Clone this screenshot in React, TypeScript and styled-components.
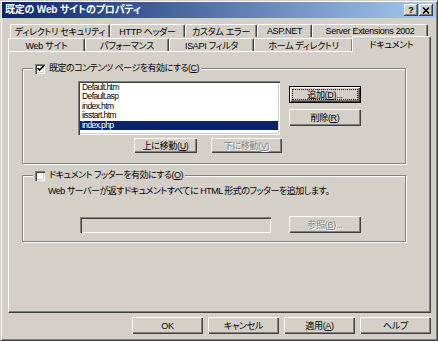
import styled, { createGlobalStyle } from "styled-components";

const GlobalStyle = createGlobalStyle`
  html, body {
    margin: 0;
    padding: 0;
    background: #d4d0c8;
  }
  body {
    font-family: "Liberation Sans", "Noto Sans CJK JP", sans-serif;
    font-size: 9px;
    font-feature-settings: "palt";
    color: #000;
  }
  * {
    box-sizing: border-box;
  }
`;

const Window = styled.div`
    width: 438px;
    height: 341px;
    display: flex;
    flex-direction: column;
    padding: 1px;
    background: #d4d0c8;
    border: 1px solid;
    border-color: #d4d0c8 #404040 #404040 #d4d0c8;
    box-shadow: inset 1px 1px #fff, inset -1px -1px #808080;
`;

const TitleBar = styled.div`
    flex: none;
    height: 16px;
    display: flex;
    align-items: center;
    padding: 0 3px 0 3px;
    background: linear-gradient(to right, #0a246a, #a6caf0);
`;

const Title = styled.div`
    flex: 1;
    color: #fff;
    font-weight: bold;
    font-size: 10px;
    line-height: 16px;
    letter-spacing: -0.2px;
    white-space: nowrap;
`;

const CaptionButton = styled.div<{ $gap: number }>`
    width: 14px;
    height: 12px;
    margin-left: ${(p) => p.$gap}px;
    display: flex;
    align-items: center;
    justify-content: center;
    background: #d4d0c8;
    box-shadow: inset -1px -1px #404040, inset 1px 1px #fff, inset -2px -2px #808080;
    font: bold 9px "Liberation Sans", sans-serif;
    line-height: 12px;
`;

const Body = styled.div`
    flex: 1;
    display: flex;
    flex-direction: column;
    padding: 6px 5px 0 6px;
`;

const TabRow = styled.div<{ $h: number; $indent: number }>`
    display: flex;
    align-items: flex-end;
    height: ${(p) => p.$h}px;
    padding-left: ${(p) => p.$indent}px;
`;

const Tab = styled.div<{ $w: number; $h: number; $active?: boolean }>`
    position: relative;
    width: ${(p) => p.$w}px;
    height: ${(p) => p.$h}px;
    flex: none;
    display: flex;
    align-items: center;
    justify-content: center;
    white-space: nowrap;
    letter-spacing: -0.3px;
    background: #d4d0c8;
    border-top: 1px solid #fff;
    border-left: 1px solid #fff;
    border-right: 1px solid #404040;
    border-radius: 2px 2px 0 0;
    box-shadow: inset -1px 0 #808080;
    ${(p) =>
        p.$active
            ? `
        z-index: 2;
        margin-left: -1px;
        margin-bottom: -1px;
    `
            : ""}
`;

const Page = styled.div`
    height: 262px;
    display: flex;
    flex-direction: column;
    padding: 11px 24px 0 13px;
    border: 1px solid;
    border-color: #fff #404040 #404040 #fff;
    box-shadow: inset -1px -1px #808080;
`;

const Group = styled.fieldset<{ $top?: number }>`
    margin: ${(p) => p.$top ?? 0}px 0 0 0;
    padding: 0;
    min-width: 0;
    border: 1px solid #808080;
    box-shadow: inset 1px 1px #fff, 1px 1px #fff;
`;

const Legend = styled.legend`
    margin-left: 10px;
    padding: 0 2px;
    height: 11px;
    background: #d4d0c8;
`;

const LegendInner = styled.span`
    display: flex;
    align-items: center;
    gap: 4px;
    height: 11px;
    line-height: 11px;
    letter-spacing: -0.5px;
    white-space: nowrap;
`;

const CheckBox = styled.span`
    width: 10px;
    height: 10px;
    flex: none;
    display: flex;
    align-items: center;
    justify-content: center;
    background: #fff;
    box-shadow: inset 1px 1px #808080, inset 2px 2px #404040, inset -1px -1px #fff, inset -2px -2px #d4d0c8;
`;

const ContentRow = styled.div`
    display: flex;
    padding: 7px 0 10px 55px;
`;

const LeftCol = styled.div`
    display: flex;
    flex-direction: column;
`;

const RightCol = styled.div`
    display: flex;
    flex-direction: column;
    gap: 6px;
    margin-left: 9px;
    padding-top: 5px;
`;

const ListBox = styled.div`
    width: 202px;
    height: 54px;
    padding: 2px 2px;
    background: #fff;
    box-shadow: inset 1px 1px #808080, inset 2px 2px #404040, inset -1px -1px #fff, inset -2px -2px #d4d0c8;
`;

const ListItem = styled.div<{ $selected?: boolean }>`
    height: 9.4px;
    line-height: 9.4px;
    padding-left: 2px;
    font-size: 8.5px;
    letter-spacing: -0.6px;
    white-space: nowrap;
    color: ${(p) => (p.$selected ? "#fff" : "#000")};
    background: ${(p) => (p.$selected ? "#0a246a" : "transparent")};
`;

const MoveRow = styled.div`
    display: flex;
    justify-content: flex-end;
    gap: 14px;
    margin: 3px -2px 0 0;
`;

const Button = styled.button<{ $w: number; $h: number; $default?: boolean }>`
    width: ${(p) => p.$w}px;
    height: ${(p) => p.$h}px;
    padding: 0;
    margin: 0;
    flex: none;
    font: inherit;
    font-feature-settings: "palt";
    letter-spacing: -0.3px;
    color: #000;
    background: #d4d0c8;
    border: ${(p) => (p.$default ? "1px solid #000" : "none")};
    box-shadow: inset 1px 1px #fff, inset -1px -1px #404040, inset -2px -2px #808080;
    outline: ${(p) => (p.$default ? "1px dotted #000" : "none")};
    outline-offset: -4px;
    white-space: nowrap;
    cursor: default;
    &:disabled {
        color: #808080;
        text-shadow: 1px 1px #fff;
    }
`;

const Desc = styled.div`
    padding: 4px 0 0 25px;
    line-height: 12px;
    letter-spacing: -0.5px;
    white-space: nowrap;
`;

const FooterRow = styled.div`
    display: flex;
    align-items: flex-end;
    gap: 18px;
    padding: 19px 0 8px 57px;
`;

const Field = styled.div`
    width: 191px;
    height: 16px;
    background: #d4d0c8;
    box-shadow: inset 1px 1px #808080, inset 2px 2px #404040, inset -1px -1px #fff, inset -2px -2px #d4d0c8;
`;

const ButtonBar = styled.div`
    display: flex;
    justify-content: flex-end;
    gap: 5px;
    margin-top: 4px;
`;

const topTabs = [
    { label: "ディレクトリ セキュリティ", w: 100 },
    { label: "HTTP ヘッダー", w: 75 },
    { label: "カスタム エラー", w: 72 },
    { label: "ASP.NET", w: 55 },
    { label: "Server Extensions 2002", w: 116 },
];

const bottomTabs = [
    { label: "Web サイト", w: 77 },
    { label: "パフォーマンス", w: 84 },
    { label: "ISAPI フィルタ", w: 85 },
    { label: "ホーム ディレクトリ", w: 99 },
];

const files = ["Default.htm", "Default.asp", "index.htm", "iisstart.htm", "index.php"];

function Check() {
    return (
        <svg width="7" height="7" viewBox="0 0 7 7">
            <path d="M0.5 3 L2.5 5 L6.5 1" fill="none" stroke="#000" strokeWidth="1.6" />
        </svg>
    );
}

export default function App() {
    return (
        <>
            <GlobalStyle />
            <Window>
                <TitleBar>
                    <Title>既定の Web サイトのプロパティ</Title>
                    <CaptionButton $gap={0}>?</CaptionButton>
                    <CaptionButton $gap={1}>
                        <svg width="8" height="7" viewBox="0 0 8 7">
                            <path d="M1 0.5 L7 6.5 M7 0.5 L1 6.5" stroke="#000" strokeWidth="1.5" />
                        </svg>
                    </CaptionButton>
                </TitleBar>
                <Body>
                    <TabRow $h={13} $indent={2}>
                        {topTabs.map((t) => (
                            <Tab key={t.label} $w={t.w} $h={13}>
                                {t.label}
                            </Tab>
                        ))}
                    </TabRow>
                    <TabRow $h={14} $indent={0}>
                        {bottomTabs.map((t) => (
                            <Tab key={t.label} $w={t.w} $h={13}>
                                {t.label}
                            </Tab>
                        ))}
                        <Tab $w={79} $h={16} $active>
                            ドキュメント
                        </Tab>
                    </TabRow>
                    <Page>
                        <Group>
                            <Legend>
                                <LegendInner>
                                    <CheckBox>
                                        <Check />
                                    </CheckBox>
                                    <span>
                                        既定のコンテンツ ページを有効にする(<u>C</u>)
                                    </span>
                                </LegendInner>
                            </Legend>
                            <ContentRow>
                                <LeftCol>
                                    <ListBox>
                                        {files.map((f) => (
                                            <ListItem key={f} $selected={f === "index.php"}>
                                                {f}
                                            </ListItem>
                                        ))}
                                    </ListBox>
                                    <MoveRow>
                                        <Button $w={63} $h={15}>
                                            上に移動(<u>U</u>)
                                        </Button>
                                        <Button $w={71} $h={15} disabled>
                                            下に移動(<u>V</u>)
                                        </Button>
                                    </MoveRow>
                                </LeftCol>
                                <RightCol>
                                    <Button $w={72} $h={17} $default>
                                        追加(<u>D</u>)...
                                    </Button>
                                    <Button $w={72} $h={17}>
                                        削除(<u>R</u>)
                                    </Button>
                                </RightCol>
                            </ContentRow>
                        </Group>
                        <Group $top={6}>
                            <Legend>
                                <LegendInner>
                                    <CheckBox />
                                    <span>
                                        ドキュメント フッターを有効にする(<u>O</u>)
                                    </span>
                                </LegendInner>
                            </Legend>
                            <Desc>Web サーバーが返すドキュメントすべてに HTML 形式のフッターを追加します。</Desc>
                            <FooterRow>
                                <Field />
                                <Button $w={72} $h={17} disabled>
                                    参照(<u>B</u>)...
                                </Button>
                            </FooterRow>
                        </Group>
                    </Page>
                    <ButtonBar>
                        <Button $w={71} $h={17}>OK</Button>
                        <Button $w={71} $h={17}>キャンセル</Button>
                        <Button $w={71} $h={17}>
                            適用(<u>A</u>)
                        </Button>
                        <Button $w={71} $h={17}>ヘルプ</Button>
                    </ButtonBar>
                </Body>
            </Window>
        </>
    );
}
